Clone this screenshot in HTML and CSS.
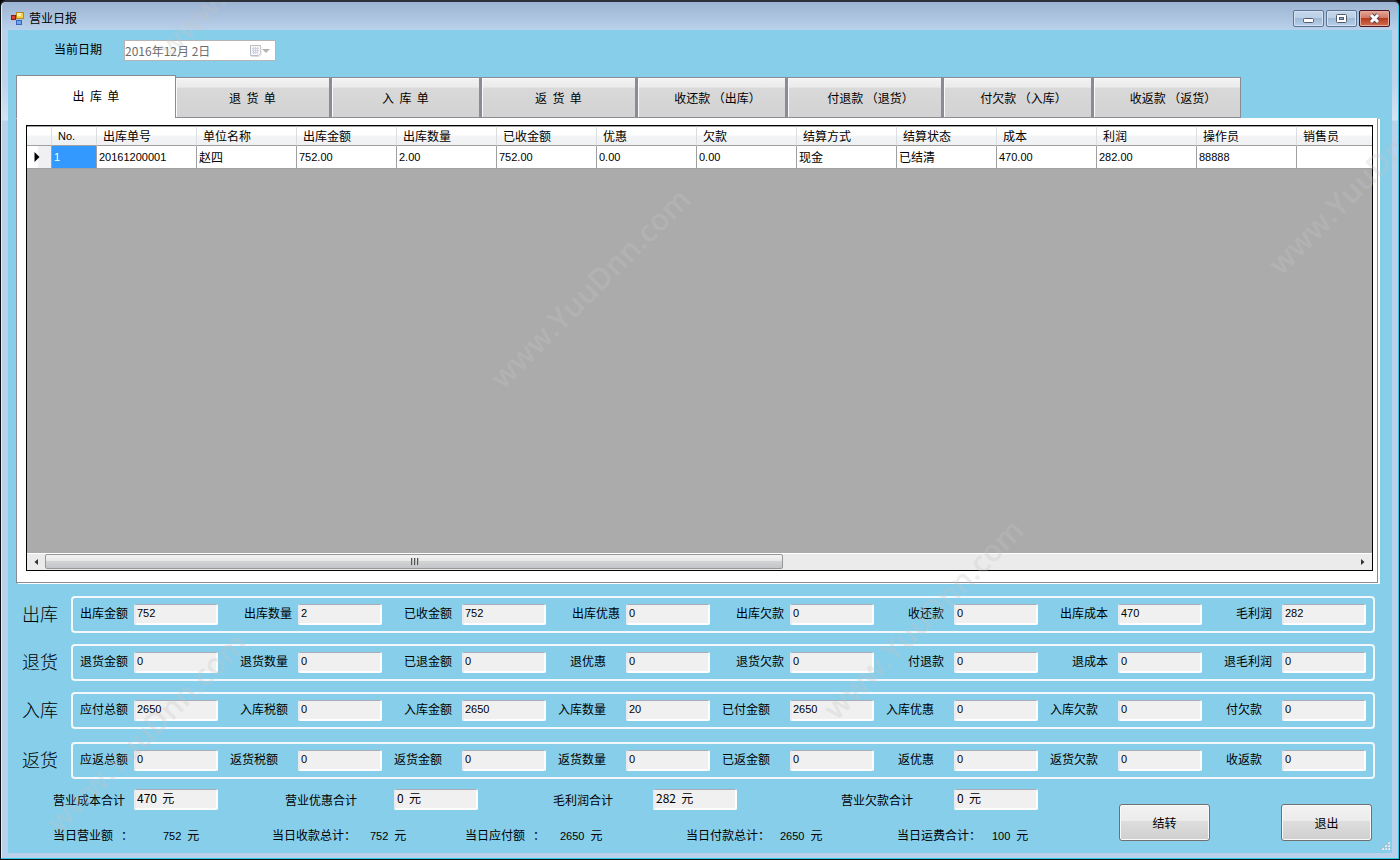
FILE: index.html
```
<!DOCTYPE html>
<html lang="zh-CN">
<head>
<meta charset="utf-8">
<title>营业日报</title>
<link rel="stylesheet" href="styles.css">
</head>
<body>
<div class="window">
  <header class="titlebar">
    <svg class="app-icon" width="14" height="14" viewBox="0 0 14 14" aria-hidden="true">
      <rect x="0.5" y="4.500" width="4" height="4" fill="#d8452f" stroke="#8e1a10"/>
      <rect x="5.500" y="1.500" width="7" height="6" fill="#fbd04a" stroke="#b98a17"/>
      <rect x="6" y="2" width="4" height="3" fill="#fdeea8"/>
      <rect x="5.500" y="9.500" width="5" height="4" fill="#6fa3ee" stroke="#3b63bd"/>
    </svg>
    <h1 class="title">营业日报</h1>
    <div class="window-buttons">
      <button class="wbtn" type="button" aria-label="最小化"><svg width="29" height="15" viewBox="0 0 29 15"><rect x="9.500" y="7.500" width="10" height="4" rx="1" fill="#fff" stroke="#535a6b"/></svg></button>
      <button class="wbtn" type="button" aria-label="最大化"><svg width="29" height="15" viewBox="0 0 29 15"><rect x="9.500" y="3.500" width="10" height="8" rx="1" fill="#fff" stroke="#535a6b"/><rect x="12.500" y="6.500" width="4" height="2" fill="#8fb0d4" stroke="#535a6b"/></svg></button>
      <button class="wbtn wbtn-close" type="button" aria-label="关闭"><svg width="29" height="15" viewBox="0 0 29 15"><path d="M11 4l7 7M18 4l-7 7" stroke="#5a4450" stroke-width="5" fill="none"/><path d="M11 4l7 7M18 4l-7 7" stroke="#fff" stroke-width="3" fill="none"/></svg></button>
    </div>
  </header>

  <main class="client">
    <div class="date-row">
      <label for="date">当前日期</label>
      <div class="picker">
        <input id="date" type="text" value="2016年12月 2日" disabled>
        <button class="picker-btn" type="button" aria-label="选择日期" disabled>
          <svg width="22" height="14" viewBox="0 0 22 14"><path d="M1.500 1.500h10v8l-2 2h-8z" fill="#f8f8fb" stroke="#bdbdc6"/><path d="M3 4.500h7M3 6.500h7M3 8.500h6M4.500 3v7M6.500 3v7M8.500 3v7" stroke="#d0d3e2"/><path d="M2 12.500h8l2-2V3" fill="none" stroke="#dcdcdc"/><path d="M13 5h8l-4 4z" fill="#b4b4b4"/></svg>
        </button>
      </div>
    </div>

    <div class="tabs" role="tablist">
      <button class="tab tab-on" type="button" role="tab" aria-selected="true">出  库  单</button>
      <button class="tab tab-b" type="button" role="tab">退  货  单</button>
      <button class="tab" type="button" role="tab">入  库  单</button>
      <button class="tab tab-b" type="button" role="tab">返  货  单</button>
      <button class="tab tab-pay" type="button" role="tab">收还款 （出库）</button>
      <button class="tab tab-b tab-pay" type="button" role="tab">付退款 （退货）</button>
      <button class="tab tab-pay" type="button" role="tab">付欠款 （入库）</button>
      <button class="tab tab-pay" type="button" role="tab">收返款 （返货）</button>
    </div>

    <section class="panel">
      <div class="grid">
        <table class="table">
          <colgroup><col class="c-mark"><col class="c-no"><col span="12" class="c-data"><col></colgroup>
          <thead>
            <tr><th></th><th class="num">No.</th><th>出库单号</th><th>单位名称</th><th>出库金额</th><th>出库数量</th><th>已收金额</th><th>优惠</th><th>欠款</th><th>结算方式</th><th>结算状态</th><th>成本</th><th>利润</th><th>操作员</th><th>销售员</th></tr>
          </thead>
          <tbody>
            <tr><td class="mark"><svg width="6" height="10" viewBox="0 0 6 10" aria-hidden="true"><path d="M0.500 0l5 5-5 5z" fill="#000"/></svg></td><td class="num picked">1</td><td class="num">20161200001</td><td>赵四</td><td class="num">752.00</td><td class="num">2.00</td><td class="num">752.00</td><td class="num">0.00</td><td class="num">0.00</td><td>现金</td><td>已结清</td><td class="num">470.00</td><td class="num">282.00</td><td class="num">88888</td><td></td></tr>
          </tbody>
        </table>
        <div class="scroll">
          <button class="arrow" type="button" aria-label="向左"><svg width="4" height="6" viewBox="0 0 4 6"><path d="M4 0v6L0.500 3z" fill="#333"/></svg></button>
          <div class="track"><div class="thumb"><i></i><i></i><i></i></div></div>
          <button class="arrow" type="button" aria-label="向右"><svg width="4" height="6" viewBox="0 0 4 6"><path d="M0 0v6l3.500-3z" fill="#333"/></svg></button>
        </div>
      </div>
    </section>

    <section class="groups">
      <div class="group-row">
        <h2>出库</h2>
        <div class="group">
          <label class="field near">出库金额<input value="752" readonly></label>
          <label class="field near">出库数量<input value="2" readonly></label>
          <label class="field mid">已收金额<input value="752" readonly></label>
          <label class="field near">出库优惠<input value="0" readonly></label>
          <label class="field near">出库欠款<input value="0" readonly></label>
          <label class="field mid">收还款<input value="0" readonly></label>
          <label class="field mid">出库成本<input value="470" readonly></label>
          <label class="field mid">毛利润<input value="282" readonly></label>
        </div>
      </div>
      <div class="group-row">
        <h2>退货</h2>
        <div class="group">
          <label class="field near">退货金额<input value="0" readonly></label>
          <label class="field mid">退货数量<input value="0" readonly></label>
          <label class="field mid">已退金额<input value="0" readonly></label>
          <label class="field far">退优惠<input value="0" readonly></label>
          <label class="field near">退货欠款<input value="0" readonly></label>
          <label class="field mid">付退款<input value="0" readonly></label>
          <label class="field mid">退成本<input value="0" readonly></label>
          <label class="field mid">退毛利润<input value="0" readonly></label>
        </div>
      </div>
      <div class="group-row">
        <h2>入库</h2>
        <div class="group">
          <label class="field near">应付总额<input value="2650" readonly></label>
          <label class="field mid">入库税额<input value="0" readonly></label>
          <label class="field mid">入库金额<input value="2650" readonly></label>
          <label class="field far">入库数量<input value="20" readonly></label>
          <label class="field far">已付金额<input value="2650" readonly></label>
          <label class="field far">入库优惠<input value="0" readonly></label>
          <label class="field far">入库欠款<input value="0" readonly></label>
          <label class="field far">付欠款<input value="0" readonly></label>
        </div>
      </div>
      <div class="group-row">
        <h2>返货</h2>
        <div class="group">
          <label class="field near">应返总额<input value="0" readonly></label>
          <label class="field far">返货税额<input value="0" readonly></label>
          <label class="field far">返货金额<input value="0" readonly></label>
          <label class="field far">返货数量<input value="0" readonly></label>
          <label class="field far">已返金额<input value="0" readonly></label>
          <label class="field far">返优惠<input value="0" readonly></label>
          <label class="field far">返货欠款<input value="0" readonly></label>
          <label class="field far">收返款<input value="0" readonly></label>
        </div>
      </div>
    </section>

    <footer class="footer">
      <div class="summary">
        <div class="totals">
          <label for="t1">营业成本合计</label><input id="t1" value="470  元" readonly>
          <label for="t2">营业优惠合计</label><input id="t2" value="0  元" readonly>
          <label for="t3">毛利润合计</label><input id="t3" value="282  元" readonly>
          <label for="t4">营业欠款合计</label><input id="t4" value="0  元" readonly>
        </div>
        <div class="daily">
          <span>当日营业额   ：</span><span><b>752</b>元</span>
          <span>当日收款总计：</span><span><b>752</b>元</span>
          <span>当日应付额   ：</span><span><b>2650</b>元</span>
          <span>当日付款总计：</span><span><b>2650</b>元</span>
          <span>当日运费合计：</span><span><b>100</b>元</span>
        </div>
      </div>
      <div class="actions">
        <button class="action" type="button">结转</button>
        <button class="action" type="button">退出</button>
      </div>
    </footer>
    <svg class="grip" width="10" height="10" viewBox="0 0 10 10" aria-hidden="true"><path d="M8 1h2M5 4h2M8 4h2M2 7h2M5 7h2M8 7h2" stroke="#e6eef4" stroke-width="2"/><path d="M7 0h2M4 3h2M7 3h2M1 6h2M4 6h2M7 6h2" stroke="#b9b4b0" stroke-width="1"/></svg>
  </main>

  <div class="marks" aria-hidden="true">
    <span class="wm wm-1">www.YuuDnn.com</span>
    <span class="wm wm-2">www.YuuDnn.com</span>
    <span class="wm wm-3">www.YuuDnn.com</span>
    <span class="wm wm-4">www.YuuDnn.com</span>
    <span class="wm wm-5">www.YuuDnn.com</span>
  </div>
</div>
</body>
</html>
```
FILE: styles.css
```
* { box-sizing: border-box; }

body {
  margin: 0;
  background: #000;
  color: #000;
  font: 12px/16px "Noto Sans CJK SC", sans-serif;
}

button, input { font: inherit; color: inherit; }
button { padding: 0; }

.window {
  position: relative;
  display: flex;
  flex-direction: column;
  min-height: 100vh;
  padding: 0 6px 6px;
  border: 1px solid #0d1013;
  border-top: 2px solid #2c3038;
  border-radius: 6px 6px 0 0;
  background: linear-gradient(#9cb4d2 0, #b9d1ea 28px, #bdd3ec 80px, #d5e3f3 118px, #b9d1ea 119px, #b9d1ea 100%);
  box-shadow: inset -1px -1px #2bcbe8, inset 1px 0 #e4edf7;
}

.titlebar {
  display: flex;
  align-items: center;
  gap: 4px;
  height: 28px;
  padding: 4px 3px 0 4px;
}
.title { flex: 1; margin: 0; font-size: 12px; font-weight: 400; }
.window-buttons { display: flex; gap: 2px; }
.wbtn {
  display: flex;
  width: 31px;
  height: 17px;
  border: 1px solid #5d7595;
  border-radius: 2px;
  background: linear-gradient(#c5d6ea 0, #bacfe6 50%, #a0bad6 50%, #b8d0ea 100%);
  box-shadow: inset 0 0 0 1px #d4e2f1;
}
.wbtn-close {
  border-color: #4c1320;
  background: linear-gradient(#e2a799 0, #d1745f 50%, #b83a20 50%, #cf7052 100%);
  box-shadow: inset 0 0 0 1px #e4ab9d;
}

.client {
  position: relative;
  flex: 1;
  display: flex;
  flex-direction: column;
  margin: 0 1px;
  padding: 10px 14px 0 8px;
  background: #87ceea;
}

.date-row { display: flex; gap: 22px; padding-left: 38px; line-height: 18px; }
.picker {
  display: flex;
  width: 152px;
  height: 21px;
  padding-right: 4px;
  border: 1px solid #b5b5b5;
  background: #fff;
}
.picker input { flex: 1; min-width: 0; padding: 0; border: 0; background: none; color: #6d6d6d; }
.picker-btn { display: flex; align-items: center; border: 0; background: none; }

.tabs { display: flex; align-items: flex-end; margin-top: 14px; }
.tab {
  width: 150px;
  height: 41px;
  border: 1px solid #898c95;
  border-left-width: 2px;
  background: linear-gradient(#f2f2f2 0, #ebebeb 24%, #d9d9d9 25%, #d2d2d2 100%);
  box-shadow: inset 1px 1px #fafafa;
  white-space: pre;
}
.tab-b { width: 156px; }
.tab-pay { padding-left: 12px; }
.tab-on {
  width: 160px;
  height: 43px;
  padding-bottom: 2px;
  border-left-width: 1px;
  border-bottom: 0;
  background: #fff;
}
.tab-on + .tab { width: 154px; border-left-width: 0; }
.tab:last-child { width: 149px; }

.panel {
  flex: 1;
  display: flex;
  padding: 6px 4px 11px 9px;
  border: 1px solid #898c95;
  border-top-color: #fff;
  background: #fff;
  box-shadow: 2px 1px #fff;
}
.grid {
  flex: 1;
  min-width: 0;
  display: flex;
  flex-direction: column;
  justify-content: space-between;
  border: 1px solid #000;
  background: #ababab;
}
.table { width: 100%; border-collapse: separate; border-spacing: 0; table-layout: fixed; }
.c-mark { width: 25px; }
.c-no { width: 45px; }
.c-data { width: 100px; }
.table th {
  height: 20px;
  padding: 0 0 0 6px;
  border-top: 1px solid #a0a0a0;
  border-right: 1px solid #dcdde0;
  border-bottom: 1px solid #a0a0a0;
  background: linear-gradient(#fff 0, #fff 45%, #f3f4f6 50%, #eff0f2 100%);
  font-weight: 400;
  text-align: left;
  line-height: 18px;
}
.table td {
  height: 23px;
  padding: 0 0 0 2px;
  border-right: 1px solid #a0a0a0;
  border-bottom: 1px solid #a0a0a0;
  background: #fff;
}
.table th:last-child, .table td:last-child { border-right: 0; }
.table .num { font-family: "Liberation Sans", sans-serif; font-size: 11px; }
.table .picked { background: #3399ff; color: #fff; }
.table .mark { padding-left: 7px; background: linear-gradient(90deg, #fff 40%, #f0f0f2 50%); }
.mark svg { display: block; }

.scroll { display: flex; height: 17px; border-top: 1px solid #fff; background: #ebebeb; }
.arrow { display: flex; align-items: center; justify-content: center; width: 18px; border: 0; background: none; }
.track { flex: 1; display: flex; }
.thumb {
  display: flex;
  align-items: center;
  justify-content: center;
  gap: 2px;
  width: 56.4%;
  height: 15px;
  border: 1px solid #979797;
  border-radius: 2px;
  background: linear-gradient(#f3f3f3 0, #e6e6e7 50%, #d2d3d5 50%, #c4c5c8 100%);
}
.thumb i { width: 1px; height: 7px; background: #555; box-shadow: 1px 0 #bbb; }

.groups { display: grid; gap: 11px; margin-top: 13px; padding-right: 3px; }
.group-row { display: grid; grid-template-columns: 49px 1fr; align-items: center; padding-left: 6px; }
.group-row:last-child { padding-top: 2px; }
.group-row h2 { margin: 0; padding-bottom: 4px; font-size: 18px; font-weight: 300; line-height: 24px; }
.group {
  display: grid;
  grid-template-columns: 145fr repeat(7, 164fr);
  padding: 6px 7px 6px 0;
  border: 2px solid #f2f8fc;
  border-radius: 4px;
}
.field { display: flex; justify-content: flex-end; line-height: 18px; white-space: nowrap; }
.near { gap: 6px; }
.mid { gap: 10px; }
.far { gap: 20px; }
.field input, .totals input {
  width: 84px;
  height: 21px;
  padding: 0 2px 3px 1px;
  border: 2px solid #fdfdfd;
  border-top: 1px solid #a9adb5;
  border-left-color: #e6ebf2;
  border-radius: 2px;
  background: #f0f0f0;
}
.field input { font: 11px/16px "Liberation Sans", sans-serif; }

.footer { display: flex; justify-content: space-between; padding-right: 6px; }
.summary { flex: 1; padding: 10px 0 0 37px; }
.totals {
  display: grid;
  grid-template-columns: 81fr 151fr 109fr 159fr 100fr 188fr 113fr 165fr;
  align-items: center;
}
.daily {
  display: grid;
  grid-template-columns: 110fr 109fr 98fr 95fr 95fr 126fr 94fr 117fr 95fr 127fr;
  margin-top: 17px;
  padding-bottom: 9px;
  white-space: pre;
}
.daily b { margin-right: 6px; font: 11px/16px "Liberation Sans", sans-serif; }
.actions { display: flex; gap: 71px; padding-top: 25px; }
.action {
  width: 91px;
  height: 37px;
  border: 1px solid #707070;
  border-radius: 3px;
  background: linear-gradient(#f2f2f2 0, #ebebeb 46%, #dddddd 47%, #cfcfcf 100%);
  box-shadow: inset 0 0 0 1px #fafafa;
}
.grip { position: absolute; right: 2px; bottom: 1px; }

.marks { position: absolute; inset: 0; overflow: hidden; pointer-events: none; }
.wm {
  position: absolute;
  width: 300px;
  margin: -20px 0 0 -150px;
  color: rgba(196, 196, 196, 0.3);
  font: 600 30px/40px "Open Sans", sans-serif;
  text-align: center;
  transform: rotate(-45deg);
}
.wm-1 { left: 589px; top: 286px; }
.wm-2 { left: 922px; top: 617px; }
.wm-3 { left: 145px; top: 730px; }
.wm-4 { left: 1367px; top: 172px; }
.wm-5 { left: 256px; top: -45px; }
```
